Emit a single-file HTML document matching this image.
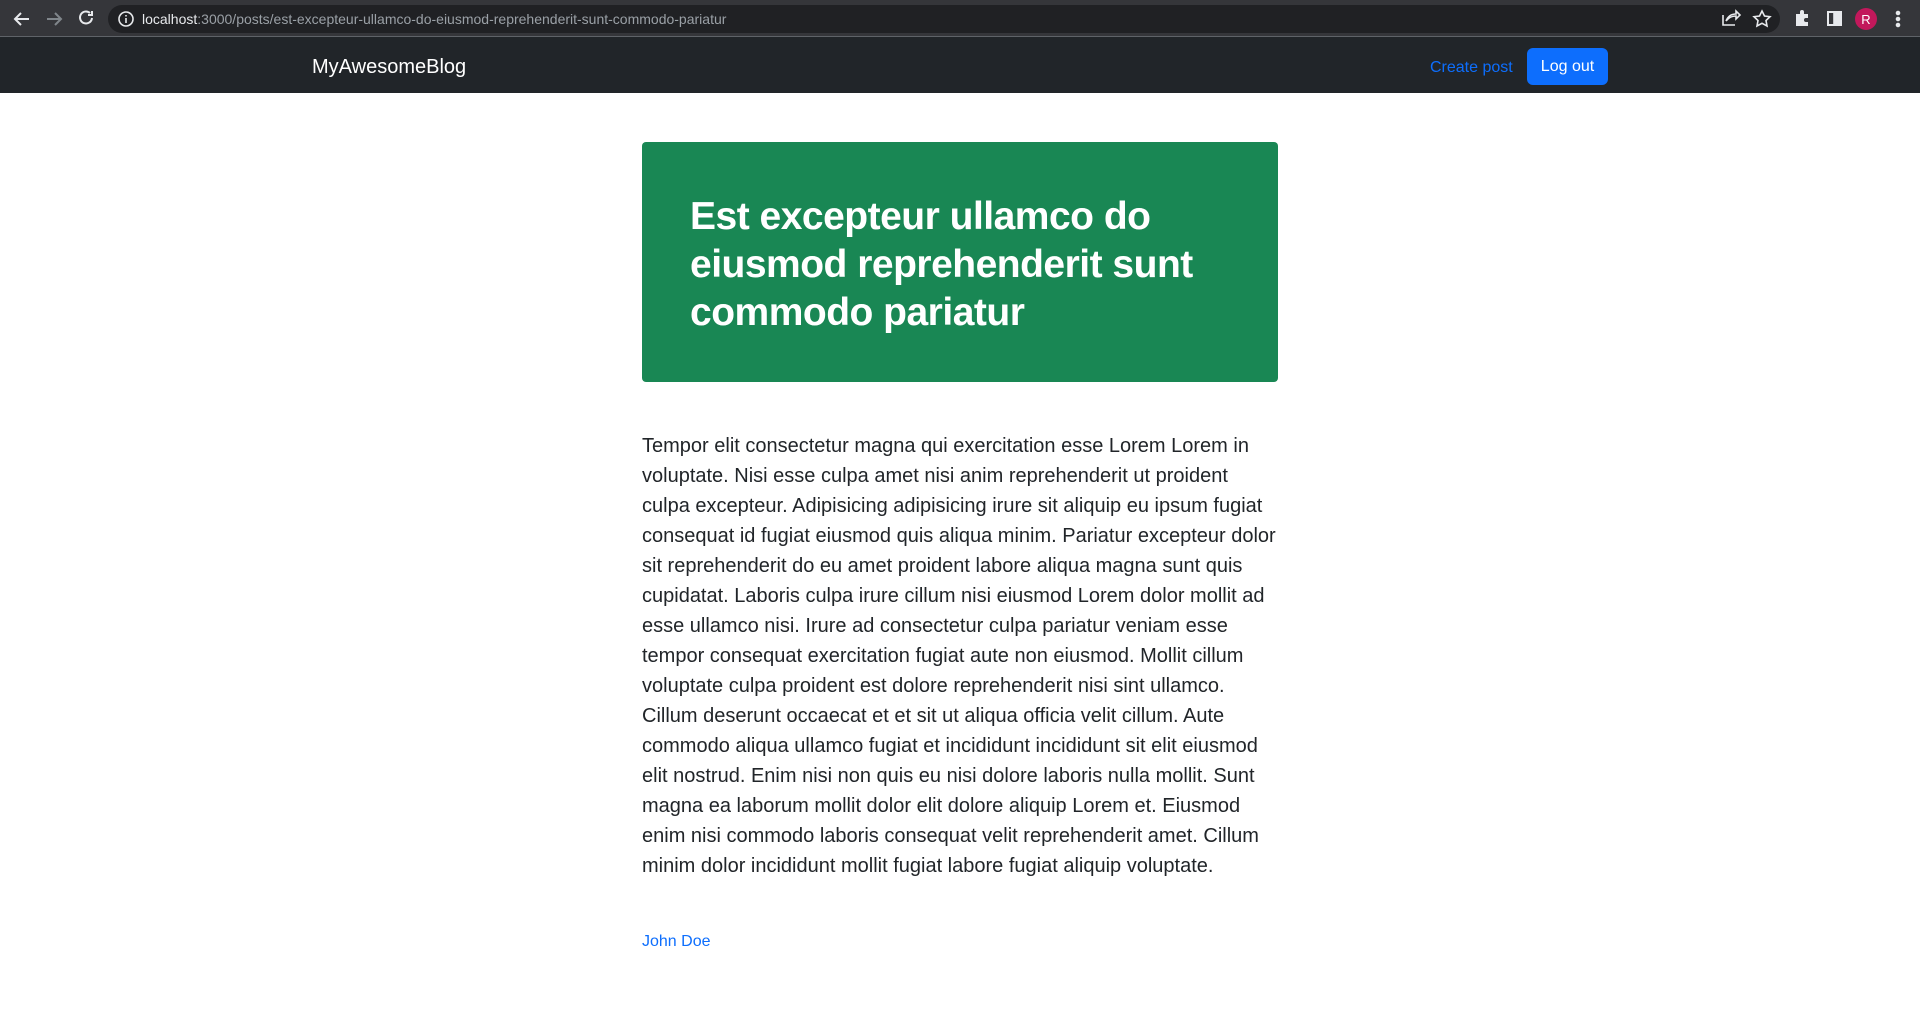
<!DOCTYPE html>
<html><head><meta charset="utf-8"><style>
*{box-sizing:border-box;margin:0;padding:0}
body{width:1920px;height:1013px;overflow:hidden;background:#fff;font-family:"Liberation Sans",sans-serif;color:#212529}
.chrome{position:absolute;top:0;left:0;width:1920px;height:37px;background:#35363a;border-bottom:1px solid #5f6368}
.omni{position:absolute;left:108px;top:5px;width:1672px;height:28px;border-radius:14px;background:#202124}
.url{position:absolute;left:142px;top:11px;font-size:14px;color:#9aa0a6;white-space:nowrap}
.url b{font-weight:normal;color:#e8eaed}
.nav{position:absolute;top:37px;left:0;width:1920px;height:56px;background:#212529}
.brand{position:absolute;left:312px;top:19px;font-size:20px;color:#fff}
.cp{position:absolute;left:1430px;top:22px;font-size:16px;color:#0d6efd}
.btn{position:absolute;left:1527px;top:11px;width:81px;height:37px;background:#0d6efd;border-radius:6px;color:#fff;font-size:16px;line-height:38px;text-align:center}
.hero{position:absolute;left:642px;top:142px;width:636px;height:240px;background:#198754;border-radius:4px;padding:51px 48px 45px}
.hero h1{font-size:39px;line-height:48px;color:#fff;font-weight:bold;white-space:nowrap;letter-spacing:-0.5px}
.body{position:absolute;left:642px;top:431px;width:700px;font-size:20px;line-height:30px;white-space:nowrap}
.auth{position:absolute;left:642px;top:933px;font-size:16px;color:#0d6efd}
</style></head><body>
<div class="chrome">
<svg width="110" height="37" style="position:absolute;left:0;top:0" fill="none" stroke-width="2">
<path d="M29 19H15M21 13l-6 6 6 6" stroke="#e8eaed"/>
<path d="M47 19h14M55 13l6 6-6 6" stroke="#80868b"/>
<path d="M92 18a6 6 0 1 1-2-5" stroke="#e8eaed"/><path d="M92 11v4h-4" stroke="#e8eaed"/>
</svg>
<div class="omni"></div>
<svg width="20" height="20" style="position:absolute;left:117px;top:9px"><circle cx="9" cy="10" r="7" stroke="#e8eaed" stroke-width="1.6" fill="none"/><path d="M9 9v5M9 6v1.5" stroke="#e8eaed" stroke-width="1.6"/></svg>
<div class="url"><b>localhost</b>:3000/posts/est-excepteur-ullamco-do-eiusmod-reprehenderit-sunt-commodo-pariatur</div>
<svg width="200" height="37" style="position:absolute;left:1720px;top:0" fill="none" stroke="#e8eaed" stroke-width="1.6">
<path d="M3 15v10h12M6 21c2-5 6-7 10-7v-3l4 4-4 4v-3c-4 0-7 1-10 5"/>
<path d="M42 11l2.5 5 5.5.7-4 3.8 1 5.5-5-2.7-5 2.7 1-5.5-4-3.8 5.5-.7z"/>
<path d="M76 14h4v-2a2 2 0 0 1 4 0v2h4v4h-2a2 2 0 0 0 0 4h2v4H76z" fill="#e8eaed" stroke="none"/>
<rect x="108" y="12" width="13" height="13" stroke-width="2"/><rect x="114" y="12" width="7" height="13" fill="#e8eaed"/>
<circle cx="146" cy="19" r="11" fill="#c2185b" stroke="none"/>
<text x="146" y="24" fill="#fff" stroke="none" font-size="13" text-anchor="middle" font-family="Liberation Sans">R</text>
<circle cx="178" cy="13" r="1.5" fill="#e8eaed"/><circle cx="178" cy="19" r="1.5" fill="#e8eaed"/><circle cx="178" cy="25" r="1.5" fill="#e8eaed"/>
</svg>
</div>
<div class="nav"><div class="brand">MyAwesomeBlog</div><div class="cp">Create post</div><div class="btn">Log out</div></div>
<div class="hero"><h1>Est excepteur ullamco do<br>eiusmod reprehenderit sunt<br>commodo pariatur</h1></div>
<div class="body">Tempor elit consectetur magna qui exercitation esse Lorem Lorem in<br>voluptate. Nisi esse culpa amet nisi anim reprehenderit ut proident<br>culpa excepteur. Adipisicing adipisicing irure sit aliquip eu ipsum fugiat<br>consequat id fugiat eiusmod quis aliqua minim. Pariatur excepteur dolor<br>sit reprehenderit do eu amet proident labore aliqua magna sunt quis<br>cupidatat. Laboris culpa irure cillum nisi eiusmod Lorem dolor mollit ad<br>esse ullamco nisi. Irure ad consectetur culpa pariatur veniam esse<br>tempor consequat exercitation fugiat aute non eiusmod. Mollit cillum<br>voluptate culpa proident est dolore reprehenderit nisi sint ullamco.<br>Cillum deserunt occaecat et et sit ut aliqua officia velit cillum. Aute<br>commodo aliqua ullamco fugiat et incididunt incididunt sit elit eiusmod<br>elit nostrud. Enim nisi non quis eu nisi dolore laboris nulla mollit. Sunt<br>magna ea laborum mollit dolor elit dolore aliquip Lorem et. Eiusmod<br>enim nisi commodo laboris consequat velit reprehenderit amet. Cillum<br>minim dolor incididunt mollit fugiat labore fugiat aliquip voluptate.</div>
<div class="auth">John Doe</div>
</body></html>
